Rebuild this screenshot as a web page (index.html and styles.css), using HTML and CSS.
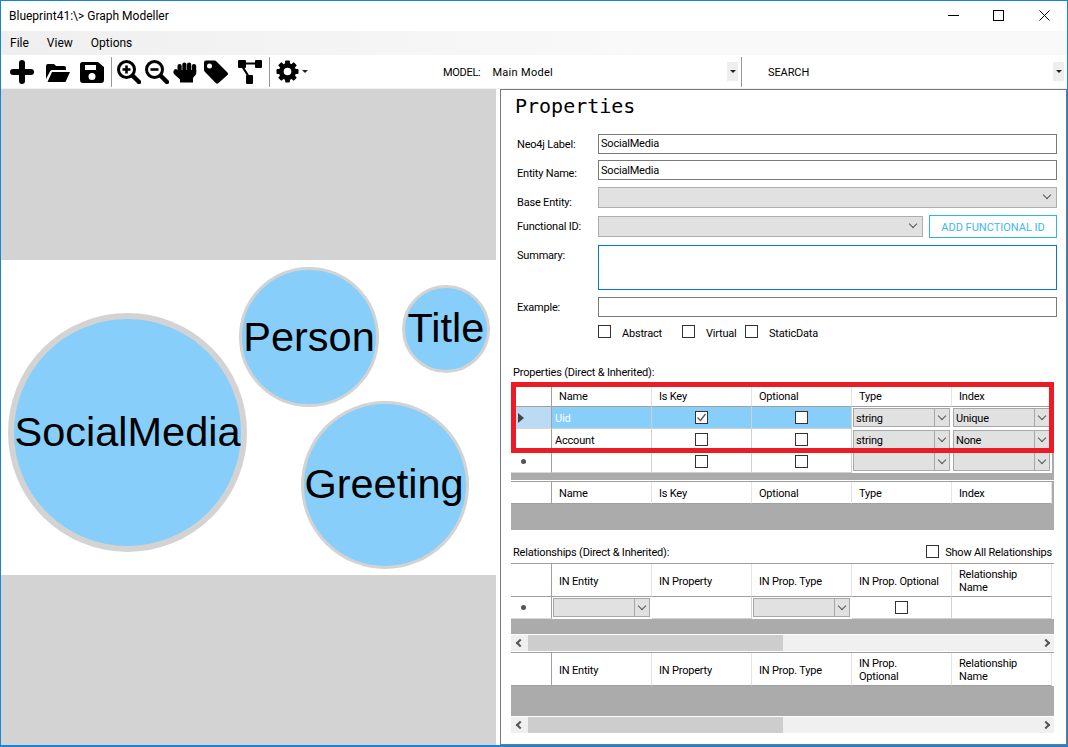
FILE: index.html
```html
<!DOCTYPE html>
<html>
 <head>
  <title>Blueprint41:\> Graph Modeller</title>
  <meta charset="utf-8" />
  <link rel="stylesheet" href="styles.css">
 </head>

 <body>
  <div class="titlebar">
   <span class="title">Blueprint41:\&gt; Graph Modeller</span>
   <div class="winbtns">
    <div class="winbtn"><svg width="11" height="11" viewBox="0 0 11 11"><path d="M0 5.500H11" stroke="#000" stroke-width="1"/></svg></div>
    <div class="winbtn"><svg width="11" height="11" viewBox="0 0 11 11"><rect x=".5" y=".5" width="10" height="10" fill="none" stroke="#000"/></svg></div>
    <div class="winbtn win-close"><svg width="11" height="11" viewBox="0 0 11 11"><path d="M.5 .5L10.500 10.500M10.500 .5L.5 10.500" stroke="#000" stroke-width="1"/></svg></div>
   </div>
  </div>

  <div class="menubar">
   <span class="menu">File</span>
   <span class="menu">View</span>
   <span class="menu">Options</span>
  </div>

  <div class="toolbar">
   <svg class="icon i-add" viewBox="0 0 24 24"><path d="M12 3V21M3 12H21" stroke="#000" stroke-width="6" stroke-linecap="round"/></svg>
   <svg class="icon i-open" viewBox="0 0 24 24"><path d="M0 19V6Q0 4 2 4H8L10 6H18Q20 6 20 8V10H6Q4.500 10 4 11.500Z"/><path d="M1.500 22L6 12H24L19.500 22Z"/></svg>
   <svg class="icon i-save" viewBox="0 0 24 24"><path fill-rule="evenodd" d="M2.500 2H18L24 7V20Q24 23 21 23H3Q0 23 0 20V4.500Q0 2 2.500 2ZM5 5V10H16V5ZM12 13A3.500 3.500 0 1 0 12 20A3.500 3.500 0 1 0 12 13Z"/></svg>
   <div class="sep s-1"></div>
   <svg class="icon i-zin" viewBox="0 0 24 24"><circle cx="9.500" cy="9.500" r="8" fill="none" stroke="#000" stroke-width="3"/><path d="M16 16L22 22" stroke="#000" stroke-width="4.500" stroke-linecap="round"/><path d="M5.500 9.500H13.500M9.500 5.500V13.500" stroke="#000" stroke-width="2.600"/></svg>
   <svg class="icon i-zout" viewBox="0 0 24 24"><circle cx="9.500" cy="9.500" r="8" fill="none" stroke="#000" stroke-width="3"/><path d="M16 16L22 22" stroke="#000" stroke-width="4.500" stroke-linecap="round"/><path d="M5.500 9.500H13.500" stroke="#000" stroke-width="2.600"/></svg>
   <svg class="icon i-hand" viewBox="0 0 24 24"><rect x="4.500" y="4" width="4.200" height="10" rx="2.100"/><rect x="9.300" y="2.500" width="4.200" height="10" rx="2.100"/><rect x="14" y="2.500" width="4.200" height="10" rx="2.100"/><rect x="18.800" y="4" width="4.400" height="10" rx="2.200"/><path d="M4.500 10H23.200V14L20 18V22.500H7V19.500L1 14Q-.5 11.500 1.500 9.500Q3 8.500 4.500 10Z"/></svg>
   <svg class="icon i-tag" viewBox="0 0 24 24"><path fill-rule="evenodd" d="M2 .5H10.500Q11.500 .5 12.500 1.500L23.500 12.500Q24.500 14 23.500 15L14.500 23Q13 24.200 12 23.200L1 12Q0 11 0 10V2.500Q0 .5 2 .5ZM5.500 3.500A2.500 2.500 0 1 0 5.500 8.500A2.500 2.500 0 1 0 5.500 3.500Z"/></svg>
   <svg class="icon i-tree" viewBox="0 0 24 24"><rect x="0" y="0" width="8" height="8" rx="1"/><rect x="17" y="0" width="7" height="8" rx="1"/><rect x="8" y="15" width="7" height="9" rx="1"/><path d="M6 3.500H18M4 6L11 17" stroke="#000" stroke-width="2.200" fill="none"/></svg>
   <div class="sep s-2"></div>
   <svg class="icon i-gear" viewBox="0 0 24 24"><circle cx="12" cy="12" r="6.500" fill="none" stroke="#000" stroke-width="5"/><rect x="9.500" y=".5" width="5" height="5" rx="1"/><rect x="9.500" y="18.500" width="5" height="5" rx="1"/><rect x=".5" y="9.500" width="5" height="5" rx="1"/><rect x="18.500" y="9.500" width="5" height="5" rx="1"/><rect x="9.500" y=".5" width="5" height="5" rx="1" transform="rotate(45 12 12)"/><rect x="9.500" y="18.500" width="5" height="5" rx="1" transform="rotate(45 12 12)"/><rect x=".5" y="9.500" width="5" height="5" rx="1" transform="rotate(45 12 12)"/><rect x="18.500" y="9.500" width="5" height="5" rx="1" transform="rotate(45 12 12)"/></svg>
   <i class="caret"></i>
   <div class="tb-model">
    <span class="tb-label l-model">MODEL:</span>
    <span class="tb-label l-main">Main Model</span>
    <div class="tb-drop"><i class="caret"></i></div>
   </div>
   <div class="sep s-3"></div>
   <div class="tb-search">
    <span class="tb-label">SEARCH</span>
    <div class="tb-drop"><i class="caret"></i></div>
   </div>
  </div>

  <div class="main">
   <div class="canvas">
    <div class="band band-top"></div>
    <div class="graph">
     <div class="node n-social">SocialMedia</div>
     <div class="node n-person">Person</div>
     <div class="node n-title">Title</div>
     <div class="node n-greeting">Greeting</div>
    </div>
    <div class="band band-bottom"></div>
   </div>

   <div class="panel">
    <div class="panel-title">Properties</div>

    <div class="form">
     <label class="lbl lb-neo">Neo4j Label:</label>
     <div class="field">SocialMedia</div>
     <label class="lbl lb-entity">Entity Name:</label>
     <div class="field">SocialMedia</div>
     <label class="lbl lb-base">Base Entity:</label>
     <div class="combo"><span class="chev"></span></div>
     <label class="lbl lb-func">Functional ID:</label>
     <div class="func-row">
      <div class="combo"><span class="chev"></span></div>
      <div class="add-btn">ADD FUNCTIONAL ID</div>
     </div>
     <label class="lbl lb-sum">Summary:</label>
     <div class="field field-focus"></div>
     <label class="lbl lb-ex">Example:</label>
     <div class="field"></div>
     <div></div>
     <div class="checks">
      <span class="cb"></span><span class="cb-text t-abstract">Abstract</span>
      <span class="cb"></span><span class="cb-text t-virtual">Virtual</span>
      <span class="cb"></span><span class="cb-text">StaticData</span>
     </div>
    </div>

    <div class="sec-label sec-props">Properties (Direct &amp; Inherited):</div>
    <div class="dg dg-props">
     <div class="hc corner"></div><div class="hc">Name</div><div class="hc">Is Key</div><div class="hc">Optional</div><div class="hc">Type</div><div class="hc">Index</div>

     <div class="rh rh-cur"><i class="arrow"></i></div>
     <div class="c c-sel c-text">Uid</div>
     <div class="c c-sel"><span class="cb"><svg width="11" height="11" viewBox="0 0 11 11"><path d="M1.500 5.500L4.500 8.500L9.500 2" fill="none" stroke="#555" stroke-width="1.300"/></svg></span></div>
     <div class="c c-sel"><span class="cb"></span></div>
     <div class="c c-cb"><div class="cell-combo">string<span class="chev-box"><span class="chev"></span></span></div></div>
     <div class="c c-cb"><div class="cell-combo">Unique<span class="chev-box"><span class="chev"></span></span></div></div>

     <div class="rh"></div>
     <div class="c c-text">Account</div>
     <div class="c"><span class="cb"></span></div>
     <div class="c"><span class="cb"></span></div>
     <div class="c c-cb"><div class="cell-combo">string<span class="chev-box"><span class="chev"></span></span></div></div>
     <div class="c c-cb"><div class="cell-combo">None<span class="chev-box"><span class="chev"></span></span></div></div>

     <div class="rh"><i class="star"></i></div>
     <div class="c c-text"></div>
     <div class="c"><span class="cb"></span></div>
     <div class="c"><span class="cb"></span></div>
     <div class="c c-cb"><div class="cell-combo"><span class="chev-box"><span class="chev"></span></span></div></div>
     <div class="c c-cb"><div class="cell-combo"><span class="chev-box"><span class="chev"></span></span></div></div>
    </div>

    <div class="dg dg-props2">
     <div class="hc corner"></div><div class="hc">Name</div><div class="hc">Is Key</div><div class="hc">Optional</div><div class="hc">Type</div><div class="hc">Index</div>
    </div>

    <div class="rel-head">
     <div class="sec-label">Relationships (Direct &amp; Inherited):</div>
     <div class="show-all"><span class="cb"></span><span class="cb-text">Show All Relationships</span></div>
    </div>

    <div class="dg dg-rel">
     <div class="hc corner"></div><div class="hc">IN Entity</div><div class="hc">IN Property</div><div class="hc">IN Prop. Type</div><div class="hc">IN Prop. Optional</div><div class="hc">Relationship<br>Name</div>
     <div class="rh"><i class="star"></i></div>
     <div class="c c-cb"><div class="cell-combo"><span class="chev-box"><span class="chev"></span></span></div></div>
     <div class="c c-text"></div>
     <div class="c c-cb"><div class="cell-combo"><span class="chev-box"><span class="chev"></span></span></div></div>
     <div class="c"><span class="cb"></span></div>
     <div class="c c-text"></div>
    </div>
    <div class="sb"><span class="sb-btn"><i class="sb-l"></i></span><div class="sb-thumb"></div><span class="sb-btn sb-end"><i class="sb-r"></i></span></div>

    <div class="dg dg-rel dg-rel2">
     <div class="hc corner"></div><div class="hc">IN Entity</div><div class="hc">IN Property</div><div class="hc">IN Prop. Type</div><div class="hc">IN Prop.<br>Optional</div><div class="hc">Relationship<br>Name</div>
    </div>
    <div class="sb"><span class="sb-btn"><i class="sb-l"></i></span><div class="sb-thumb"></div><span class="sb-btn sb-end"><i class="sb-r"></i></span></div>

    <div class="red-box"></div>
   </div>
  </div>
 </body>
</html>
```

FILE: styles.css
```css
* {box-sizing: border-box;}
html, body {margin: 0; padding: 0;}
body {width: 1068px; height: 747px; overflow: hidden; background: #fff; border: 1px solid #1883d7; border-bottom-width: 2px; font: 12px/14px Roboto, "Liberation Sans", sans-serif; color: #000;}

/* title bar */
.titlebar {height: 30px; display: flex; align-items: center; justify-content: space-between; padding-left: 8px;}
.winbtns {display: flex;}
.winbtn {width: 45px; height: 30px; padding-bottom: 2px; display: flex; align-items: center; justify-content: center;}
.win-close {width: 46px;}

/* menu */
.menubar {height: 24px; display: flex; align-items: center; padding-left: 9px; gap: 18px; background: linear-gradient(to right, #efefef, #f9f9f9 60%);}

/* toolbar */
.toolbar {height: 34px; display: flex; align-items: center; padding-left: 9px; border-bottom: 1px solid #f0f0f0;}
.icon {width: 24px; height: 24px; flex: none;}
.i-open {margin-left: 12px;}
.i-save {margin-left: 10px;}
.i-zin {margin-left: 5px;}
.i-zout {margin-left: 4px;}
.i-hand {margin-left: 4px;}
.i-tag {margin-left: 7px;}
.i-tree {margin-left: 10px;}
.i-gear {margin-left: 6px; width: 23px; height: 23px;}
.sep {width: 1px; height: 30px; background: #999; flex: none;}
.s-1 {margin-left: 7px;}
.s-2 {margin-left: 7px;}
.s-3 {margin-left: 3px;}
.caret {display: inline-block; width: 0; height: 0; border: 3px solid transparent; border-top-color: #222; border-bottom-width: 0;}
.i-gear + .caret {margin-left: 3px; flex: none;}
.tb-label {font-size: 11px; letter-spacing: -.1px; white-space: nowrap; padding-top: 2px;}
.l-model {letter-spacing: -.3px;}
.l-main {margin-left: 12px; letter-spacing: .3px;}
.tb-model {width: 295px; margin-left: 135px; display: flex; align-items: center; flex: none;}
.tb-search {flex: 1; padding: 0 3px 0 26px; display: flex; align-items: center;}
.tb-drop {width: 11px; height: 19px; margin-left: auto; background: #eee; display: flex; align-items: center; justify-content: center; flex: none;}

/* main area */
.main {height: 656px; display: flex;}
.canvas {width: 495px; display: flex; flex-direction: column;}
.band {background: #d3d3d3;}
.band-top {height: 171px;}
.band-bottom {flex: 1;}
.graph {height: 315px; position: relative; background: #fff;}
.node {position: absolute; border-radius: 50%; background: #87cefa; border: 3px solid #d3d3d3; padding-bottom: 2px; display: flex; align-items: center; justify-content: center; font: 41.5px/47px "Liberation Sans", Arial, sans-serif; white-space: nowrap;}
.n-social {left: 7px; top: 53px; width: 239px; height: 239px; border-width: 6px;}
.n-person {left: 238px; top: 7px; width: 140px; height: 140px; border-width: 3.5px;}
.n-title {left: 401px; top: 25px; width: 88px; height: 88px; padding-bottom: 4px;}
.n-greeting {left: 300px; top: 141px; width: 168px; height: 168px; padding: 0 2px 3px 0;}

/* properties panel */
.panel {width: 567px; margin-left: 4px; border: 1px solid #777; position: relative; font-size: 11px; letter-spacing: -.2px;}
.panel-title {height: 44px; padding: 3px 0 0 14px; letter-spacing: 0; font: 20px/26px "DejaVu Sans Mono", "Liberation Mono", monospace;}
.form {display: grid; grid-template-columns: 81px 459px; grid-template-rows: 19px 20px 21px 23px 45px 20px 13px; row-gap: 7px; padding-left: 16px;}
.lbl {white-space: nowrap;}
.lb-neo {padding-top: 4px;}
.lb-entity {padding-top: 7px;}
.lb-base {padding-top: 9px;}
.lb-func {padding-top: 5px;}
.lb-sum {padding-top: 4px;}
.lb-ex {padding-top: 4px;}
.field {border: 1px solid #7a7a7a; padding: 2px 2px 0; height: 20px;}
.lb-entity + .field {padding-top: 3px;}
.field-focus {border-color: #0078d7; height: 45px;}
.combo {height: 21px; background: #e1e1e1; border: 1px solid #adadad; position: relative; flex: 1;}
.func-row {display: flex; gap: 6px; align-items: center;}
.add-btn {width: 128px; height: 23px; border: 1px solid #2bb5ee; color: #3db8ec; text-align: center; line-height: 23px; letter-spacing: 0;}
.chev {display: block; width: 6px; height: 6px; border: solid #555; border-width: 0 1px 1px 0; transform: rotate(45deg);}
.combo .chev {position: absolute; right: 6px; top: 4px;}
.checks {display: flex; align-items: center; margin-top: 1px; height: 13px;}
.cb {display: inline-block; width: 13px; height: 13px; border: 1px solid #333; background: #fff; flex: none;}
.cb svg {display: block;}
.cb-text {margin-left: 11px; padding-top: 2px;}
.checks .cb-text {padding-top: 4px;}
.t-abstract {width: 60px;}
.t-virtual {width: 39px;}

/* data grids */
.sec-label {white-space: nowrap;}
.sec-props {margin: 28px 0 0 12px; line-height: 16px;}
.dg {margin-left: 10px; width: 543px; background: #ababab; display: grid; grid-template-columns: 41px repeat(5, 100px); align-content: start;}
.dg-props {margin-top: 3px; height: 96px; grid-template-rows: 23px 22px 22px 22px;}
.dg-props2 {margin-top: 1px; height: 49px; grid-template-rows: 22px; border-top: 1px solid #a0a0a0;}
.dg-rel {margin-top: 4px; height: 71px; grid-template-rows: 33px 22px; border-top: 1px solid #a0a0a0;}
.dg-rel .hc:nth-child(6), .dg-rel .c:last-child {box-shadow: 2px 0 0 #fff;}
.dg-rel2 {margin-top: 1px; height: 64px;}
.hc {background: #fff; border-right: 1px solid #e3e3e3; border-bottom: 1px solid #a0a0a0; padding: 2px 0 0 7px; display: flex; align-items: center; line-height: 13px;}
.corner {border-right-color: #a0a0a0;}
.rh {background: #fff; border-right: 1px solid #a0a0a0; border-bottom: 1px solid #d8d8d8; display: flex; align-items: center;}
.rh-cur {background: #bbdaf4;}
.arrow {margin-left: 7px; width: 0; height: 0; border: solid transparent; border-width: 5px 0 5px 6px; border-left-color: #444;}
.star {margin-left: 10px; width: 5px; height: 5px; border-radius: 50%; background: #555;}
.c {background: #fff; border-right: 1px solid #d0d0d0; border-bottom: 1px solid #d0d0d0; display: flex; align-items: center; justify-content: center;}
.c-text {justify-content: flex-start; padding: 2px 0 0 3px;}
.c-sel {background: #87cefa;}
.c-sel.c-text {color: #fff;}
.c-cb {padding: 1px; justify-content: stretch; align-items: stretch; border-color: #fff;}
.cell-combo {flex: 1; background: #e1e1e1; border: 1px solid #a8a8a8; display: flex; align-items: center; padding: 2px 0 0 2px; position: relative;}
.chev-box {position: absolute; right: 0; top: 0; bottom: 0; width: 15px; border-left: 1px solid #a8a8a8; display: flex; align-items: center; justify-content: center;}
.chev-box .chev {margin-top: -3px;}

.rel-head {display: flex; justify-content: space-between; align-items: center; margin: 14px 14px 0 12px; height: 15px;}
.rel-head .sec-label {padding-top: 2px;}
.show-all {display: flex; align-items: center;}
.show-all .cb-text {margin-left: 6px;}

/* scrollbars */
.sb {margin: 1px 0 0 10px; width: 543px; height: 16px; background: #f0f0f0; display: flex; align-items: center;}
.sb-btn {width: 17px; height: 16px; display: flex; align-items: center; justify-content: center; flex: none;}
.sb-end {margin-left: auto;}
.sb-thumb {width: 255px; height: 16px; background: #cdcdcd;}
.sb-l, .sb-r {width: 6px; height: 6px; border: solid #555; border-width: 0 0 2px 2px; transform: rotate(45deg);}
.sb-r {transform: rotate(-135deg);}

/* highlight drawn over the first grid */
.red-box {position: absolute; left: 10px; top: 292px; width: 543px; height: 71px; border: 5px solid #ed1c24;}
```
